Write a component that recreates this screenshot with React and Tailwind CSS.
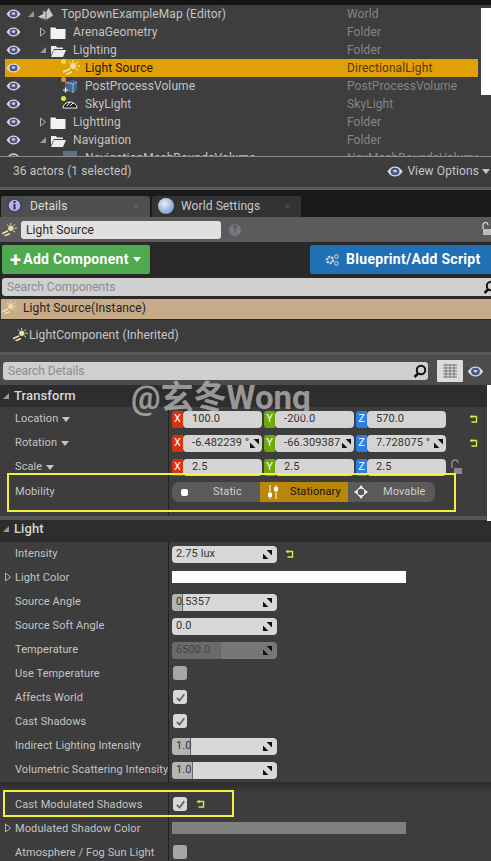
import React from 'react';

const Eye = ({ className = 'w-[15px] h-[10px]' }) => (
  <svg viewBox="0 0 15 10" className={className}>
    <path d="M0.5 5C3 1.500 5 0.500 7.500 0.500S12 1.500 14.500 5C12 8.500 10 9.500 7.500 9.500S3 8.500 0.500 5z" fill="#d5dae6" />
    <ellipse cx="7.500" cy="5" rx="4" ry="3.300" fill="#4b5388" />
    <ellipse cx="7.500" cy="4.600" rx="1.800" ry="1.300" fill="#c6cce4" />
  </svg>
);

const Arrow = ({ open }) =>
  open ? (
    <svg viewBox="0 0 8 8" className="w-2 h-2">
      <path d="M1 7L7 1V7z" fill="#9a9a9a" />
    </svg>
  ) : (
    <svg viewBox="0 0 8 10" className="w-2 h-[10px]">
      <path d="M1.500 1L6.500 5L1.500 9z" fill="none" stroke="#b5b5b5" />
    </svg>
  );

const Folder = ({ open }) => (
  <svg viewBox="0 0 16 13" className="w-4 h-[13px]">
    {open ? (
      <path d="M1 2h5l1 1.500h6V5H4L1 11zM4 6h12l-3 7H1z" fill="#ececec" />
    ) : (
      <path d="M0.500 1.500h5l1 1.500h9v10h-15z" fill="#f2f2f2" />
    )}
  </svg>
);

const SunIcon = ({ className = 'w-[18px] h-[16px]' }) => (
  <svg viewBox="0 0 18 16" className={className}>
    <circle cx="11" cy="6" r="3" fill="#f0e0a0" />
    <path d="M11 0v3M16 1.500l-2.500 2.500M18 6h-3M16 10.500l-2.500-2M7 1.500l1.500 2" stroke="#f4ecc8" strokeWidth="1" />
    <path d="M1 11l7-3v2l-7 3zM3 14l7-3v2l-5 2z" fill="#f0e0b0" />
  </svg>
);

const layouts = {
  0: { arrow: 'w-[14px]', icon: 'ml-[2px] w-[24px]' },
  1: { arrow: 'w-[26px]', icon: 'ml-[3px] w-[23px]' },
  2: { arrow: 'w-[26px]', icon: 'ml-[15px] w-[23px]' },
};

const Row = ({ depth, open, icon, name, type, selected }) => (
  <div className={`flex h-[18px] items-center ml-[5px] ${selected ? 'bg-[#e0a106]' : ''}`}>
    <div className="w-px shrink-0" />
    <Eye className="w-[15px] h-[10px] shrink-0" />
    <div className={`shrink-0 flex items-center justify-end ${layouts[depth].arrow}`}>
      {open !== undefined && <Arrow open={open} />}
    </div>
    <div className={`shrink-0 flex items-center ${layouts[depth].icon}`}>{icon}</div>
    <span className={`flex-1 truncate ${selected ? 'text-[#2a1500]' : 'text-[#c4c4c4]'}`}>{name}</span>
    <span className={`w-[131px] shrink-0 ${selected ? 'text-[#5a3608]' : 'text-[#858585]'}`}>{type}</span>
  </div>
);

const Reset = () => (
  <svg viewBox="0 0 9 9" className="w-[9px] h-[9px] shrink-0">
    <path d="M1.500 1.500h6v5.500h-5" fill="none" stroke="#d8e64a" strokeWidth="1.400" />
    <path d="M3.500 0L0.500 1.500L3.500 3.500z" fill="#d8e64a" />
  </svg>
);

const Spin = () => (
  <svg viewBox="0 0 10 10" className="w-[9px] h-[9px] shrink-0">
    <path d="M4 0h6v6zM0 4l6 6H0z" fill="#111" />
  </svg>
);

const Prop = ({ label, expand, children }) => (
  <div className="flex h-6">
    <div className="w-[169px] shrink-0 border-r border-[#222] flex items-center overflow-hidden whitespace-nowrap relative pl-[15px] pt-px text-[#c4c4c4]">
      {expand && (
        <span className="absolute left-[4px] top-[6px]">
          <Arrow open={false} />
        </span>
      )}
      {label}
    </div>
    <div className="flex-1 flex items-center pl-[3px]">{children}</div>
  </div>
);

const Axis = ({ letter, color, value, spin, mr }) => (
  <div className={`flex h-[17px] ${mr}`}>
    <div className={`w-[11px] rounded-l-[3px] flex items-center justify-center text-white ${color}`}>{letter}</div>
    <div className="w-[79px] rounded-[4px] bg-[#d4d4d4] text-[#333] flex items-center pl-[9px] pr-[3px] justify-between overflow-hidden whitespace-nowrap">
      <span className="overflow-hidden">{value}</span>
      {spin && <Spin />}
    </div>
  </div>
);

const Vector = ({ vals, spin }) => (
  <div className="flex mt-px">
    <Axis letter="X" color="bg-[#d9320e]" value={vals[0]} spin={spin} mr="mr-[2px]" />
    <Axis letter="Y" color="bg-[#6fa80a]" value={vals[1]} spin={spin} mr="mr-[2px]" />
    <Axis letter="Z" color="bg-[#2b7fe0]" value={vals[2]} spin={spin} />
  </div>
);

const Num = ({ value, fill, tick, disabled }) => (
  <div className={`relative w-[105px] h-[17px] rounded-[4px] flex items-center justify-between pl-[4px] pr-[5px] overflow-hidden ${disabled ? 'bg-[#777] text-[#444]' : 'bg-[#d8d8d8] text-[#333]'}`}>
    {fill && <div className={`absolute left-0 top-0 bottom-0 ${fill} ${disabled ? 'bg-[#6a6a6a]' : 'bg-[#b4b4b4]'}`} />}
    {tick && <div className={`absolute top-0 bottom-0 w-px bg-[#666] ${tick}`} />}
    <span className="relative">{value}</span>
    <span className="relative flex"><Spin /></span>
  </div>
);

const Check = ({ on }) => (
  <div className={`ml-px -mt-[2px] w-[14px] h-[14px] rounded-[3px] flex items-center justify-center ${on ? 'bg-[#d8d8d8]' : 'bg-[#a6a6a6]'}`}>
    {on && (
      <svg viewBox="0 0 12 12" className="w-[11px] h-[11px]">
        <path d="M2 6.500L5 9.500L10 2.500" fill="none" stroke="#666" strokeWidth="2" />
      </svg>
    )}
  </div>
);

const Search = ({ className = 'w-[14px] h-[14px]' }) => (
  <svg viewBox="0 0 14 14" className={`${className} shrink-0`}>
    <circle cx="8" cy="6" r="4.200" fill="none" stroke="#111" strokeWidth="2" />
    <path d="M5 9.500L1.500 13" stroke="#111" strokeWidth="2.500" />
  </svg>
);

const Caret = ({ label }) => (
  <span className="flex items-center gap-[4px]">
    {label}
    <svg viewBox="0 0 8 5" className="w-2 h-[5px]"><path d="M0 0h8L4 5z" fill="#c4c4c4" /></svg>
  </span>
);

export default function App() {
  return (
    <div className="relative w-[491px] h-[861px] overflow-hidden bg-[#3d3d3d] text-[11px] tracking-[0.1px]" style={{ fontFamily: 'Roboto, "Noto Sans CJK SC", sans-serif' }}>
      <div className="h-[5px] bg-[#141414]" />

      {/* outliner */}
      <div className="flex h-[151px] bg-[#3e3e3e] text-[12px] tracking-[0.1px]">
        <div className="w-[478px] overflow-hidden">
          <Row depth={0} open icon={<svg viewBox="0 0 20 16" className="w-[18px] h-[16px]"><path d="M1 11l6-3V4l3 2 3-5 2 4 3 5-8 5z" fill="#c9c9c9" /><path d="M10 6v9M6 12l4 3 8-5" stroke="#555" fill="none" /></svg>} name="TopDownExampleMap (Editor)" type="World" />
          <Row depth={1} open={false} icon={<Folder />} name="ArenaGeometry" type="Folder" />
          <Row depth={1} open icon={<Folder open />} name="Lighting" type="Folder" />
          <Row depth={2} selected icon={<span className="relative flex"><SunIcon /><span className="absolute -left-[1px] -top-[1px] w-[5px] h-[5px] rounded-full bg-[#f6dc3c]" /></span>} name="Light Source" type="DirectionalLight" />
          <Row depth={2} icon={<span className="relative flex"><svg viewBox="0 0 16 16" className="w-4 h-4"><path d="M3 4l9-2 3 2v8l-4 3-8-2z" fill="#46668c" /><path d="M3 4l8 2 4-2M11 6v9" stroke="#9db8d8" fill="none" /><path d="M1 12h5M3.500 9.500v5" stroke="#fff" strokeWidth="1.200" /></svg><span className="absolute -left-[1px] -top-[1px] w-[5px] h-[5px] rounded-full bg-[#ee8c28]" /></span>} name="PostProcessVolume" type="PostProcessVolume" />
          <Row depth={2} icon={<span className="relative flex"><svg viewBox="0 0 16 14" className="w-4 h-[14px]"><path d="M1 11a7 6 0 0 1 14 0z" fill="#222" stroke="#e8e8e8" /><path d="M5 9l3-4M8 9l3-3" stroke="#fff" /></svg><span className="absolute -left-[1px] -top-[1px] w-[5px] h-[5px] rounded-full bg-[#f6dc3c]" /></span>} name="SkyLight" type="SkyLight" />
          <Row depth={1} open={false} icon={<Folder />} name="Lightting" type="Folder" />
          <Row depth={1} open icon={<Folder open />} name="Navigation" type="Folder" />
          <Row depth={2} icon={<svg viewBox="0 0 16 14" className="w-4 h-[14px]"><rect x="1" width="14" height="14" fill="#5d7086" /></svg>} name="NavigationMeshBoundsVolume" type="NavMeshBoundsVolume" />
        </div>
        <div className="flex-1 pl-[3px] pt-[3px]">
          <div className="h-[87px] bg-white" />
        </div>
      </div>
      <div className="h-px bg-[#8c8c8c]" />

      <div className="h-[30px] bg-[#3d3d3d] flex items-center justify-between pl-[13px] pr-[1px] pb-[2px] text-[#c4c4c4] text-[12px] tracking-[0.1px]">
        <span>36 actors (1 selected)</span>
        <div className="flex items-center gap-[3px]">
          <Eye className="w-[18px] h-[11px]" />
          <span>View Options</span>
          <svg viewBox="0 0 8 5" className="w-2 h-[5px]"><path d="M0 0h8L4 5z" fill="#c4c4c4" /></svg>
        </div>
      </div>
      <div className="h-[3px] bg-[#5c5c5c]" />

      {/* tabs */}
      <div className="h-[27px] bg-[#1a1a1a] flex items-end pl-px gap-[2px] text-[12px]">
        <div className="w-[149px] h-[21px] rounded-t-[3px] bg-[#4e4e4e] flex items-center pl-[6px] pr-[11px] pb-px text-[#dcdcdc]">
          <svg viewBox="0 0 16 16" className="w-4 h-4 shrink-0"><circle cx="7.500" cy="7.500" r="6.500" fill="#b3b6d8" stroke="#3d3f78" strokeWidth="1.500" /><rect x="6.500" y="6" width="2" height="5.500" fill="#2b2d60" /><rect x="6.500" y="3" width="2" height="2" fill="#2b2d60" /></svg>
          <span className="ml-[7px] flex-1">Details</span>
          <span className="text-[#666] text-[10px]">×</span>
        </div>
        <div className="w-[149px] h-[21px] rounded-t-[3px] bg-[#333] flex items-center pl-[6px] pr-[11px] pb-px text-[#c8c8c8]">
          <span className="w-4 h-4 rounded-full shrink-0 bg-[radial-gradient(circle_at_40%_35%,#e8f0fa,#5d84c0)]" />
          <span className="ml-[7px] flex-1">World Settings</span>
          <span className="text-[#555] text-[10px]">×</span>
        </div>
      </div>

      {/* name */}
      <div className="h-[25px] bg-[#5b5b5b] flex items-center relative">
        <SunIcon className="w-[16px] h-[14px] ml-[1px] shrink-0" />
        <div className="ml-[4px] w-[200px] h-[18px] rounded-[3px] bg-[#e0e0e0] text-[#2a2a2a] text-[12px] flex items-center pl-[5px]">Light Source</div>
        <span className="ml-[8px] w-[12px] h-[12px] rounded-full bg-[#74787e] text-[#4e5258] text-[9px] font-bold flex items-center justify-center">?</span>
        <svg viewBox="0 0 9 14" className="absolute right-0 top-[5px] w-[9px] h-[14px]"><path d="M1 7V3a2.500 2.500 0 0 1 5 0" fill="none" stroke="#ddd" strokeWidth="1.200" /><rect y="7" x="1" width="8" height="6" fill="#bbb" /></svg>
      </div>

      {/* buttons */}
      <div className="h-[36px] bg-[#292929] flex items-start justify-between pt-[3px] pl-[2px] text-[14px] font-bold text-white tracking-[0.3px]">
        <div className="w-[148px] h-[29px] rounded-[2px] bg-[#4fa94f] flex items-center pl-[8px]">
          <span className="text-[20px] leading-none mr-[2px] font-bold">+</span>
          <span>Add Component</span>
          <svg viewBox="0 0 8 5" className="ml-[4px] w-2 h-[5px]"><path d="M0 0h8L4 5z" fill="#fff" /></svg>
        </div>
        <div className="w-[181px] h-[29px] rounded-l-[2px] bg-[#2170b3] flex items-center pl-[15px]">
          <svg viewBox="0 0 14 12" className="w-[14px] h-[12px] mr-[7px] shrink-0"><circle cx="5" cy="6" r="3" fill="none" stroke="#ddd" strokeWidth="2.400" strokeDasharray="2 1" /><circle cx="11.500" cy="2.500" r="1.800" fill="none" stroke="#ddd" /><circle cx="11.500" cy="9.500" r="1.800" fill="none" stroke="#ddd" /></svg>
          <span>Blueprint/Add Script</span>
        </div>
      </div>

      {/* components */}
      <div className="h-[21px] bg-[#292929] pl-[2px]">
        <div className="h-[18px] rounded-l-[3px] bg-[#d0d0d0] text-[#8d8d8d] text-[12px] tracking-normal flex items-center justify-between pl-[5px] overflow-hidden">
          <span>Search Components</span>
          <span className="-mr-[6px]"><Search /></span>
        </div>
      </div>
      <div className="h-[20px] ml-px bg-[#c8ab88] text-[#222] text-[12px] flex items-center pb-[3px]">
        <SunIcon className="w-[16px] h-[14px] shrink-0" />
        <span className="ml-[6px]">Light Source(Instance)</span>
      </div>
      <div className="h-px bg-[#292929]" />
      <div className="h-[32px] bg-[#3c3c3c] text-[#c8c8c8] text-[12px] flex items-center pl-[11px] pb-[3px]">
        <SunIcon className="w-[18px] h-[14px] shrink-0" />
        <span>LightComponent (Inherited)</span>
      </div>

      {/* details search */}
      <div className="h-[33px] bg-[#4c4c4c] flex items-center pt-[2px] pl-[3px] border-t-[3px] border-[#585858]">
        <div className="w-[425px] h-[18px] rounded-[3px] bg-[#cfcfcf] text-[#8d8d8d] text-[12px] tracking-normal flex items-center justify-between pl-[5px] pr-px">
          <span>Search Details</span>
          <Search />
        </div>
        <div className="ml-[9px] w-[26px] h-[22px] bg-[#dcdcdc] rounded-[1px] flex items-center justify-center">
          <svg viewBox="0 0 14 14" className="w-[14px] h-[14px]"><path d="M0 1h14M0 4h14M0 7h14M0 10h14M0 13h14M3 0v14M7 0v14M11 0v14" stroke="#777" /></svg>
        </div>
        <span className="ml-[4px]"><Eye className="w-[17px] h-[11px]" /></span>
      </div>

      {/* transform */}
      <div className="h-[22px] bg-[#2d2d2d] flex items-center pl-[2px] pb-px text-[13px] font-medium text-[#d8d8d8]">
        <Arrow open />
        <span className="ml-[4px]">Transform</span>
      </div>
      <div className="h-[109px]">
        <Prop label={<Caret label="Location" />}>
          <Vector vals={['100.0', '-200.0', '570.0']} />
          <span className="ml-[23px]"><Reset /></span>
        </Prop>
        <Prop label={<Caret label="Rotation" />}>
          <Vector vals={['-6.482239 °', '-66.309387', '7.728075 °']} spin />
          <span className="ml-[23px]"><Reset /></span>
        </Prop>
        <Prop label={<Caret label="Scale" />}>
          <Vector vals={['2.5', '2.5', '2.5']} />
          <svg viewBox="0 0 12 16" className="ml-[4px] w-[12px] h-[16px]"><path d="M2 9V4a3 3 0 0 1 6 0" fill="none" stroke="#888" strokeWidth="1.500" /><rect x="4" y="9" width="8" height="6" fill="#888" /></svg>
        </Prop>
        <Prop label={<span className="mt-[2px]">Mobility</span>}>
          <div className="flex h-5 w-[263px] mt-[2px] rounded-[7px] overflow-hidden bg-[#5a5a5a] text-[#cfcfcf]">
            <div className="w-[88px] flex items-center pl-[9px]">
              <span className="w-[7px] h-[7px] rounded-[2px] bg-white" />
              <span className="ml-[25px]">Static</span>
            </div>
            <div className="w-[88px] bg-[#b8860b] text-[#1c1204] flex items-center pl-[7px]">
              <svg viewBox="0 0 12 14" className="w-[12px] h-[14px] shrink-0"><path d="M3 0v14M9 0v14" stroke="#fff" /><rect x="1" y="8" width="4" height="4" fill="#fff" /><rect x="7" y="2" width="4" height="4" fill="#fff" /></svg>
              <span className="ml-[11px]">Stationary</span>
            </div>
            <div className="flex-1 flex items-center pl-[6px]">
              <svg viewBox="0 0 14 14" className="w-[14px] h-[14px] shrink-0"><circle cx="7" cy="7" r="4" fill="none" stroke="#fff" /><path d="M7 0L9 3H5zM7 14L5 11H9zM0 7L3 5V9zM14 7L11 9V5z" fill="#fff" /></svg>
              <span className="ml-[15px]">Movable</span>
            </div>
          </div>
        </Prop>
        <div className="h-[13px] ml-[168px] border-l border-[#222]" />
      </div>
      <div className="h-[4px] bg-[#555]" />

      {/* light */}
      <div className="h-[22px] bg-[#2d2d2d] flex items-center pl-[2px] pb-[4px] text-[13px] font-medium text-[#d8d8d8]">
        <Arrow open />
        <span className="ml-[4px]">Light</span>
      </div>
      <Prop label="Intensity">
        <Num value="2.75 lux" />
        <span className="ml-[8px]"><Reset /></span>
      </Prop>
      <Prop label="Light Color" expand>
        <div className="w-[234px] h-[12px] -mt-[2px] bg-white" />
      </Prop>
      <Prop label="Source Angle">
        <Num value="0.5357" fill="w-[10px]" tick="left-[10px]" />
      </Prop>
      <Prop label="Source Soft Angle">
        <Num value="0.0" />
      </Prop>
      <Prop label="Temperature">
        <Num value="6500.0" fill="w-[48px]" tick="left-[48px]" disabled />
      </Prop>
      <Prop label="Use Temperature"><Check /></Prop>
      <Prop label="Affects World"><Check on /></Prop>
      <Prop label="Cast Shadows"><Check on /></Prop>
      <Prop label="Indirect Lighting Intensity">
        <Num value="1.0" fill="w-[18px]" tick="left-[18px]" />
      </Prop>
      <Prop label="Volumetric Scattering Intensity">
        <Num value="1.0" fill="w-[20px]" tick="left-[20px]" />
      </Prop>
      <div className="h-[11px] bg-gradient-to-b from-[#2c2c2c] to-[#3d3d3d]" />
      <Prop label="Cast Modulated Shadows">
        <Check on />
        <span className="ml-[9px] -mt-[2px]"><Reset /></span>
      </Prop>
      <Prop label="Modulated Shadow Color" expand>
        <div className="w-[234px] h-[12px] -mt-[2px] bg-[#808080]" />
      </Prop>
      <Prop label="Atmosphere / Fog Sun Light"><Check /></Prop>

      {/* scrollbar, annotations, watermark */}
      <div className="absolute right-0 top-[385px] w-[4px] h-[136px] bg-white" />
      <div className="absolute left-[7px] top-[473px] w-[449px] h-[39px] border-2 border-[#f2f23c]" />
      <div className="absolute left-[3px] top-[790px] w-[231px] h-[27px] border-2 border-[#f2f23c]" />
      <div className="absolute left-[131px] top-[378px] text-[33px] leading-[40px] font-bold tracking-normal text-[#c8c8c8]/70 whitespace-nowrap">@玄冬Wong</div>
    </div>
  );
}
